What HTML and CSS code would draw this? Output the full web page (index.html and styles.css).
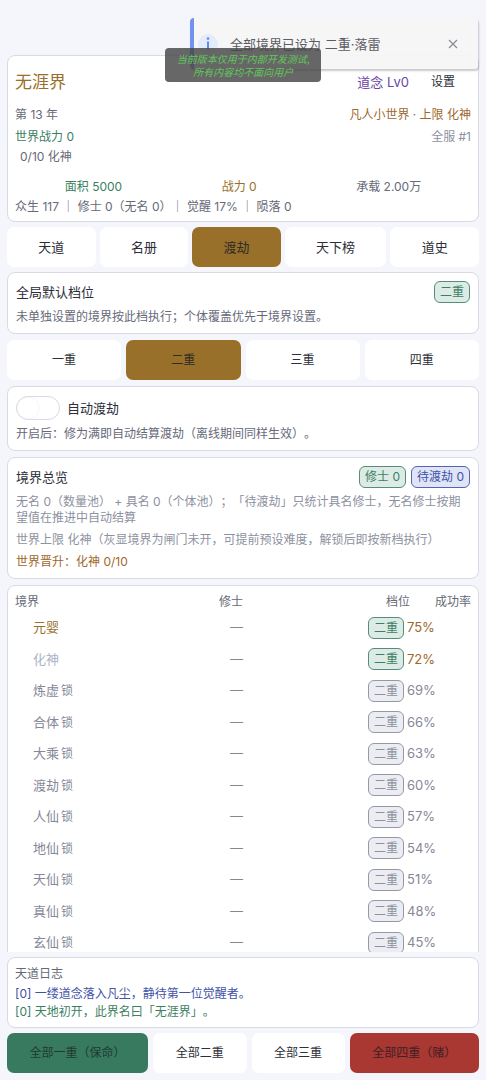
FILE: index.html
```html
<!DOCTYPE html>
<html lang="zh-CN">
<head>
<meta charset="utf-8">
<meta name="viewport" content="width=device-width, initial-scale=1">
<title>无涯界</title>
<link rel="stylesheet" href="styles.css">
</head>
<body>
<div class="app">
  <header class="card world">
    <div class="world-top">
      <h1 class="world-name">无涯界</h1>
      <span class="dao">道念 Lv0</span>
      <button class="settings" type="button">设置</button>
    </div>
    <div class="line line-year"><span>第 13 年</span><span class="amber">凡人小世界 · 上限 化神</span></div>
    <div class="line line-power"><span class="green">世界战力 0</span><span class="muted">全服 #1</span></div>
    <div class="line line-progress">0/10 化神</div>
    <div class="line stats"><span class="green">面积 5000</span><span class="gold">战力 0</span><span>承载 2.00万</span></div>
    <div class="line">众生 117 ｜ 修士 0（无名 0）｜ 觉醒 17% ｜ 陨落 0</div>
  </header>

  <nav class="tabs">
    <button class="btn" type="button">天道</button>
    <button class="btn" type="button">名册</button>
    <button class="btn active" type="button">渡劫</button>
    <button class="btn" type="button">天下榜</button>
    <button class="btn" type="button">道史</button>
  </nav>

  <main class="panel">
    <section class="card box">
      <div class="box-head"><h2>全局默认档位</h2><span class="badge">二重</span></div>
      <p>未单独设置的境界按此档执行；个体覆盖优先于境界设置。</p>
    </section>

    <div class="levels">
      <button class="btn" type="button">一重</button>
      <button class="btn active" type="button">二重</button>
      <button class="btn" type="button">三重</button>
      <button class="btn" type="button">四重</button>
    </div>

    <section class="card box">
      <div class="auto">
        <input class="switch" type="checkbox" role="switch" id="auto">
        <label for="auto">自动渡劫</label>
      </div>
      <p>开启后：修为满即自动结算渡劫（离线期间同样生效）。</p>
    </section>

    <section class="card box">
      <div class="box-head"><h2>境界总览</h2><span class="badge">修士 0</span><span class="badge blue">待渡劫 0</span></div>
      <p class="muted">无名 0（数量池） + 具名 0（个体池）；「待渡劫」只统计具名修士，无名修士按期望值在推进中自动结算</p>
      <p class="muted">世界上限 化神（灰显境界为闸门未开，可提前预设难度，解锁后即按新档执行）</p>
      <p class="amber">世界晋升：化神 0/10</p>
    </section>

    <section class="card realms">
      <table>
        <colgroup><col class="c-name"><col class="c-count"><col><col class="c-gap"><col class="c-rate"></colgroup>
        <thead><tr><th class="name">境界</th><th>修士</th><th colspan="2">档位</th><th>成功率</th></tr></thead>
        <tbody>
          <tr class="open"><td class="name gold">元婴</td><td>—</td><td class="tier"><span class="badge">二重</span></td><td class="rate" colspan="2">75%</td></tr>
          <tr class="open"><td class="name pale">化神</td><td>—</td><td class="tier"><span class="badge">二重</span></td><td class="rate" colspan="2">72%</td></tr>
          <tr><td class="name">炼虚<span class="lock">锁</span></td><td>—</td><td class="tier"><span class="badge grey">二重</span></td><td class="rate" colspan="2">69%</td></tr>
          <tr><td class="name">合体<span class="lock">锁</span></td><td>—</td><td class="tier"><span class="badge grey">二重</span></td><td class="rate" colspan="2">66%</td></tr>
          <tr><td class="name">大乘<span class="lock">锁</span></td><td>—</td><td class="tier"><span class="badge grey">二重</span></td><td class="rate" colspan="2">63%</td></tr>
          <tr><td class="name">渡劫<span class="lock">锁</span></td><td>—</td><td class="tier"><span class="badge grey">二重</span></td><td class="rate" colspan="2">60%</td></tr>
          <tr><td class="name">人仙<span class="lock">锁</span></td><td>—</td><td class="tier"><span class="badge grey">二重</span></td><td class="rate" colspan="2">57%</td></tr>
          <tr><td class="name">地仙<span class="lock">锁</span></td><td>—</td><td class="tier"><span class="badge grey">二重</span></td><td class="rate" colspan="2">54%</td></tr>
          <tr><td class="name">天仙<span class="lock">锁</span></td><td>—</td><td class="tier"><span class="badge grey">二重</span></td><td class="rate" colspan="2">51%</td></tr>
          <tr><td class="name">真仙<span class="lock">锁</span></td><td>—</td><td class="tier"><span class="badge grey">二重</span></td><td class="rate" colspan="2">48%</td></tr>
          <tr><td class="name">玄仙<span class="lock">锁</span></td><td>—</td><td class="tier"><span class="badge grey">二重</span></td><td class="rate" colspan="2">45%</td></tr>
        </tbody>
      </table>
    </section>
  </main>

  <section class="card log">
    <h3>天道日志</h3>
    <p class="indigo">[0] 一缕道念落入凡尘，静待第一位觉醒者。</p>
    <p class="green">[0] 天地初开，此界名曰「无涯界」。</p>
  </section>

  <footer class="actions">
    <button class="btn safe" type="button">全部一重（保命）</button>
    <button class="btn" type="button">全部二重</button>
    <button class="btn" type="button">全部三重</button>
    <button class="btn danger" type="button">全部四重（赌）</button>
  </footer>
</div>

<div class="toast" role="status">
  <svg class="toast-icon" viewBox="0 0 20 20" aria-hidden="true"><circle cx="10" cy="10" r="10" fill="#e4ebfa"/><circle cx="10" cy="4.6" r="1.3" fill="#5c8df2"/><path d="M10 7.5v8" stroke="#5c8df2" stroke-width="2" fill="none"/></svg>
  <span class="toast-text">全部境界已设为 二重·落雷</span>
  <button class="toast-close" type="button" aria-label="关闭"><svg viewBox="0 0 10 10"><path d="M1 1l8 8M9 1l-8 8" stroke="#8b8e96" stroke-width="1.3" fill="none"/></svg></button>
</div>
<div class="notice">当前版本仅用于内部开发测试,<br>所有内容均不面向用户</div>
</body>
</html>
```
FILE: styles.css
```css
* { box-sizing: border-box; }

body {
  margin: 0;
  background: #f5f6fb;
  color: #666a78;
  font: 12px/16px Inter, "Noto Sans CJK SC", sans-serif;
  text-spacing-trim: space-all;
}

h1, h2, h3, p { margin: 0; font-weight: 400; }
button { font: inherit; border: 0; padding: 0; cursor: pointer; text-spacing-trim: inherit; }

.app {
  display: flex;
  flex-direction: column;
  gap: 5px;
  height: 100vh;
  padding: 55px 7px 7px;
}

.card {
  background: #fff;
  border: 1px solid #d9dbe4;
  border-radius: 8px;
}

.green { color: #3c8062; }
.gold { color: #98702a; }
.amber { color: #a0672a; }
.muted { color: #8d91a0; }
.indigo { color: #3f53a8; }
.pale { color: #a9b3c4; }

/* World summary */
.world { padding: 8px 7px 4px; }
.world-top { display: flex; align-items: center; height: 36px; }
.world-name { flex: 1; font-size: 17px; line-height: 24px; color: #98702a; }
.dao { font-size: 13px; color: #6b45a8; }
.settings { align-self: stretch; margin-left: 6px; padding: 0 16px; background: none; color: #2c2e38; }
.line { display: flex; justify-content: space-between; line-height: 20px; white-space: pre; }
.line-year { margin-top: 5px; }
.line-power { margin-top: 2px; }
.line-progress { padding-left: 5px; }
.stats { margin-top: 10px; justify-content: space-around; }

/* Buttons */
.btn {
  flex: 1 1 auto;
  height: 40px;
  border-radius: 7px;
  background: #fff;
  color: #2c2e38;
  white-space: nowrap;
}
.btn.active { background: #98702a; color: #2f2b26; }
.btn.safe { background: #387a60; color: #1f3a33; }
.btn.danger { background: #a93732; color: #3f2026; }
.tabs, .levels, .actions { display: flex; flex: none; gap: 5px; }
.tabs { gap: 4px; font-size: 13px; }

/* Scrolling panel */
.panel {
  flex: 1;
  min-height: 0;
  display: flex;
  flex-direction: column;
  gap: 6px;
  overflow: hidden;
}
.panel > * { flex: none; }
.box { display: flex; flex-direction: column; gap: 6px; padding: 8px; }
.box-head { display: flex; align-items: center; gap: 5px; height: 22px; }
.box-head h2 { flex: 1; font-size: 13px; color: #2c2e38; }
.badge {
  display: inline-block;
  height: 22px;
  padding: 0 5px;
  border: 1px solid #558d7a;
  border-radius: 6px;
  background: #dcebe6;
  color: #3c8062;
  font-size: 12px;
  line-height: 20px;
  white-space: nowrap;
}
.badge.blue { border-color: #5264b4; background: #dfe4f6; color: #3f53a8; }
.badge.grey { border-color: #9598a7; background: #ecedf2; color: #8d91a0; }

.auto { display: flex; align-items: center; gap: 7px; height: 25px; font-size: 13px; color: #2c2e38; }
.switch {
  appearance: none;
  width: 44px;
  height: 24px;
  margin: 0;
  border: 1px solid #d9dbe4;
  border-radius: 12px;
  background: radial-gradient(circle at 11px 11px, #fff 10px, #f6f6f9 11px, #fff 12px);
}

/* Realm table */
.realms { padding: 6px 7px; }
.realms table { width: 100%; table-layout: fixed; border-collapse: collapse; }
.realms th, .realms td { padding: 0; font-weight: 400; text-align: right; }
.realms th { height: 20px; }
.realms td { padding: 6px 0; font-size: 13px; line-height: 1.5; color: #858897; }
.c-name { width: 25%; }
.c-count { width: 25%; }
.c-gap { width: 3px; }
.c-rate { width: 61px; }
.realms .name { text-align: left; }
.realms td.name { padding-left: 18px; }
.realms .gold { color: #98702a; }
.realms .pale { color: #a9b3c4; }
.realms .tier { padding: 0 3px 0 0; }
.realms .tier .badge { display: block; width: fit-content; margin-left: auto; }
.realms .rate { text-align: left; }
.realms .open .rate { color: #a0672a; }
.lock { margin-left: 2px; font-size: 12px; }

/* Log */
.log { flex: none; padding: 7px 7px 6px; line-height: 18px; }
.log h3 { margin-bottom: 2px; font-size: 12px; }

/* Overlays */
.toast {
  position: absolute;
  top: 18px;
  right: 8px;
  display: flex;
  align-items: center;
  width: 288px;
  height: 51px;
  padding: 0 20px 0 4px;
  border-left: 4px solid #7391ee;
  border-radius: 4px;
  background: rgba(245, 245, 245, 0.95);
  box-shadow: 1px 2px 2px rgba(60, 60, 80, 0.28);
}
.toast-icon { width: 20px; height: 20px; }
.toast-text { flex: 1; margin-left: 12px; font-size: 13px; color: #5b5d63; }
.toast-close { display: flex; background: none; }
.toast-close svg { width: 10px; height: 10px; }
.notice {
  position: absolute;
  top: 48px;
  left: 34%;
  width: 156px;
  padding: 4px 0;
  border-radius: 4px;
  background: rgba(70, 70, 70, 0.82);
  color: #62c85c;
  font: italic 10px/13px "Noto Sans CJK SC", sans-serif;
  text-align: center;
  white-space: nowrap;
}
```
